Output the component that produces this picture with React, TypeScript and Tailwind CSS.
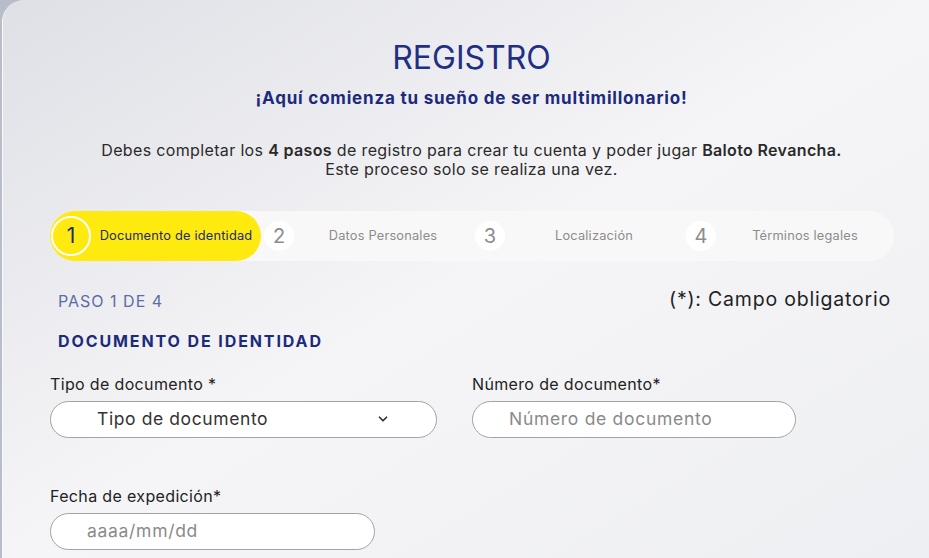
import { ChevronDown } from 'lucide-react'

const steps = [
  { n: 1, label: 'Documento de identidad' },
  { n: 2, label: 'Datos Personales' },
  { n: 3, label: 'Localización' },
  { n: 4, label: 'Términos legales' },
]

const font = { fontFamily: 'Inter, "Noto Sans", sans-serif' }

function Stepper({ current }: { current: number }) {
  return (
    <div className="flex h-[50px] w-[844px] rounded-full bg-[#f8f8f9]">
      {steps.map(step => {
        const active = step.n === current
        return (
          <div
            key={step.n}
            className={`flex flex-1 items-center rounded-full ${active ? 'bg-[#ffea0f]' : ''}`}
          >
            {active ? (
              <div className="ml-[1px] flex h-[40px] w-[40px] items-center justify-center rounded-full border-2 border-white text-[21px] text-[#1c2a6e]">
                {step.n}
              </div>
            ) : (
              <div className="ml-[3px] flex h-[30px] w-[30px] items-center justify-center rounded-full bg-white text-[20px] text-[#8c8c8c]">
                {step.n}
              </div>
            )}
            <span
              className={`flex-1 text-center text-[12.8px] tracking-[0.2px] ${active ? 'text-[#1c2a6e]' : 'text-[#8c8c8c]'}`}
            >
              {step.label}
            </span>
          </div>
        )
      })}
    </div>
  )
}

function Field({
  label,
  placeholder,
  width,
  select,
}: {
  label: string
  placeholder: string
  width: string
  select?: boolean
}) {
  return (
    <div className="flex flex-col">
      <label className="mb-[7px] text-[16px] leading-[20px] tracking-[0.35px] text-[#222]">{label}</label>
      <div
        className={`flex h-[37px] items-center rounded-full border border-[#a3a3a3] bg-white ${width}`}
      >
        {select ? (
          <>
            <span className="ml-[46px] flex-1 text-[17.5px] tracking-[0.6px] text-[#333]">{placeholder}</span>
            <ChevronDown className="mr-[46px] h-[14px] w-[14px] text-[#333]" strokeWidth={3} />
          </>
        ) : (
          <input
            placeholder={placeholder}
            className="ml-[36px] w-full bg-transparent text-[17.5px] tracking-[0.7px] text-[#333] outline-none placeholder:text-[#8a8a8a]"
          />
        )}
      </div>
    </div>
  )
}

export default function App() {
  return (
    <div className="h-screen overflow-hidden bg-[#b9bdc9]" style={font}>
      <div className="ml-[2px] h-full overflow-hidden rounded-tl-[22px] border-l border-white/60 bg-gradient-to-br from-[#dfe0e6] via-[#f5f5f7] to-[#eeeff2] pl-[47px] pr-[36px]">
        <div className="flex flex-col items-center">
          <h1 className="mt-[42px] text-[32px] leading-none text-[#1f2f85]">REGISTRO</h1>
          <p className="mt-[12px] text-[17px] font-bold tracking-[0.8px] text-[#1c2a7c]">
            ¡Aquí comienza tu sueño de ser multimillonario!
          </p>
          <p className="mt-[29px] text-center text-[16px] leading-[19px] tracking-[0.35px] text-[#2a2a2a]">
            Debes completar los <b className="font-semibold">4 pasos</b> de registro para crear tu
            cuenta y poder jugar <b className="font-semibold">Baloto Revancha.</b>
            <br />
            Este proceso solo se realiza una vez.
          </p>
        </div>

        <div className="mt-[32px]">
          <Stepper current={1} />
        </div>

        <div className="mt-[28px] flex items-center justify-between">
          <span className="ml-[8px] text-[16px] tracking-[1px] text-[#5d6ca6]">PASO 1 DE 4</span>
          <span className="-mt-[4px] mr-[2px] text-[19.5px] tracking-[0.8px] text-[#1f1f1f]">
            (*): Campo obligatorio
          </span>
        </div>

        <h2 className="ml-[8px] mt-[15px] text-[16px] font-bold tracking-[1.9px] text-[#1c2a7c]">
          DOCUMENTO DE IDENTIDAD
        </h2>

        <div className="mt-[21px] flex gap-[35px]">
          <Field label="Tipo de documento *" placeholder="Tipo de documento" width="w-[387px]" select />
          <Field label="Número de documento*" placeholder="Número de documento" width="w-[324px]" />
        </div>

        <div className="mt-[48px]">
          <Field label="Fecha de expedición*" placeholder="aaaa/mm/dd" width="w-[325px]" />
        </div>
      </div>
    </div>
  )
}
